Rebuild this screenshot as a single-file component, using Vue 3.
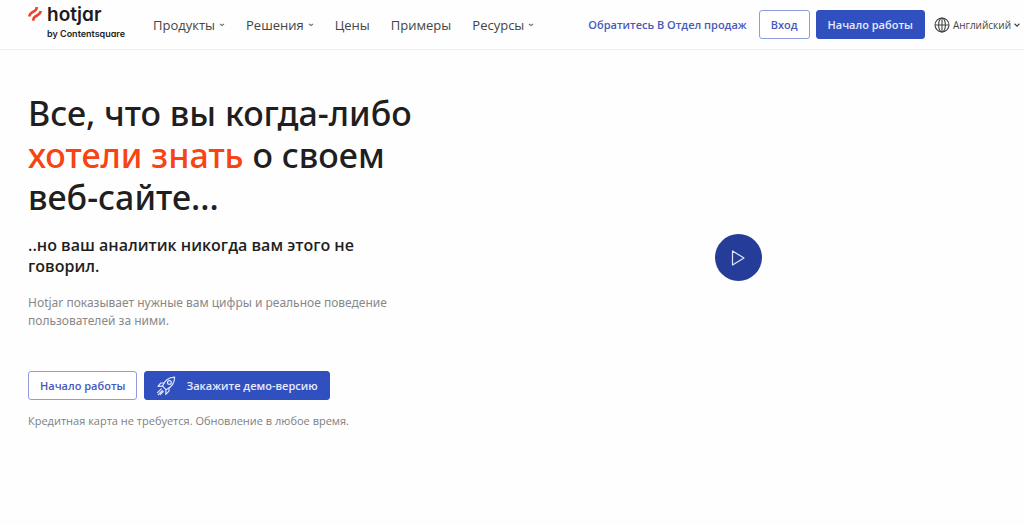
<script setup>
const menu = [
  { label: 'Продукты', more: true },
  { label: 'Решения', more: true },
  { label: 'Цены', more: false },
  { label: 'Примеры', more: false },
  { label: 'Ресурсы', more: true },
]
</script>

<template>
  <div class="page">
    <header class="bar">
      <a class="logo" href="#" aria-label="hotjar by Contentsquare">
        <svg class="mark" viewBox="0 0 14 16" aria-hidden="true">
          <g fill="none" stroke="#e8452c" stroke-width="2.6">
            <path d="M8.600 1v1.200c0 3.600-7.200 3.200-7.200 8.200" />
            <path d="M12.600 5c0 5-7.200 4.400-7.200 8.400v1.400" />
          </g>
        </svg>
        <span class="words">
          <span class="name">hotjar</span>
          <span class="by">by Contentsquare</span>
        </span>
      </a>
      <nav class="menu">
        <a v-for="item in menu" :key="item.label" href="#">
          {{ item.label }}
          <svg v-if="item.more" class="caret" viewBox="0 0 6 4" aria-hidden="true">
            <path d="M1 1l2 1.500L5 1" fill="none" stroke="#777" stroke-width="1.200" />
          </svg>
        </a>
      </nav>
      <div class="actions">
        <a class="sales" href="#">Обратитесь В Отдел продаж</a>
        <button class="btn outline login" type="button">Вход</button>
        <button class="btn solid start" type="button">Начало работы</button>
        <button class="lang" type="button">
          <svg class="globe" viewBox="0 0 16 16" aria-hidden="true">
            <g fill="none" stroke="#444" stroke-width="1.100">
              <circle cx="8" cy="8" r="7" />
              <ellipse cx="8" cy="8" rx="3.400" ry="7" />
              <path d="M1 8h14M8 1v14" />
            </g>
          </svg>
          <span>Английский</span>
          <svg class="chev" viewBox="0 0 6 4" aria-hidden="true">
            <path d="M.6.8L3 3.100 5.400.8" fill="none" stroke="#444" stroke-width="1.200" />
          </svg>
        </button>
      </div>
    </header>

    <main class="hero">
      <section class="copy">
        <h1>Все, что вы когда-либо <em>хотели знать</em> о своем веб-сайте...</h1>
        <h2>..но ваш аналитик никогда вам этого не говорил.</h2>
        <p class="lead">Hotjar показывает нужные вам цифры и реальное поведение пользователей за ними.</p>
        <div class="cta">
          <button class="btn outline" type="button">Начало работы</button>
          <button class="btn solid demo" type="button">
            <svg class="rocket" viewBox="0 0 20 20" aria-hidden="true">
              <g fill="none" stroke="#dfe6ff" stroke-width="1.200" stroke-linejoin="round" stroke-linecap="round">
                <path d="M6.500 10.200C8.500 5 12.500 1.300 18.600 1.200c.1 6-3.400 10.200-8.700 12.500z" />
                <circle cx="13.400" cy="6.500" r="1.900" />
                <path d="M8.300 7H4.800L2 10.300l4.500-.1M13 11.800v3.400L9.800 18.400l.1-4.700M5.300 12.900L1.500 16.600M6.300 14.600l-4 4M7.200 15.500l-3 3.100" />
              </g>
            </svg>
            <span>Закажите демо-версию</span>
          </button>
        </div>
        <p class="note">Кредитная карта не требуется. Обновление в любое время.</p>
      </section>
      <section class="media">
        <button class="play" type="button" aria-label="Воспроизвести видео">
          <svg viewBox="0 0 14 16" aria-hidden="true">
            <path d="M1.500 1v14L13 8z" fill="none" stroke="#dfe5ff" stroke-width="1.200" stroke-linejoin="round" />
          </svg>
        </button>
      </section>
    </main>
  </div>
</template>

<style>
body {
  margin: 0;
  background: #fefefe;
}
</style>

<style scoped>
.page {
  font-family: "Open Sans", "Noto Sans", sans-serif;
  color: #1f1f21;
}
.page * {
  box-sizing: border-box;
}
a {
  color: inherit;
  text-decoration: none;
}
button {
  font: inherit;
  cursor: pointer;
}
.bar {
  display: flex;
  align-items: center;
  height: 50px;
  padding: 0 4px 0 28px;
  border-bottom: 1px solid #efefef;
}
.logo {
  display: flex;
  align-items: flex-start;
  gap: 5px;
  width: 125px;
  padding-bottom: 3px;
  color: #1c1c1e;
  font-family: Inter, sans-serif;
  font-feature-settings: "cv11";
}
.mark {
  width: 14px;
  height: 16px;
}
.words {
  display: flex;
  flex-direction: column;
}
.name {
  font-size: 19px;
  line-height: 18px;
  font-weight: 600;
}
.by {
  margin-top: 4px;
  font-size: 9px;
  line-height: 12px;
  font-weight: 600;
  white-space: nowrap;
}
.menu {
  display: flex;
  gap: 21px;
  font-size: 13px;
  color: #444;
  white-space: nowrap;
}
.menu a {
  display: flex;
  align-items: center;
  gap: 4px;
}
.caret {
  width: 6px;
  height: 4px;
}
.actions {
  display: flex;
  align-items: center;
  margin-left: auto;
  white-space: nowrap;
}
.sales {
  margin-right: 12px;
  font-size: 11px;
  font-weight: 600;
  color: #4659ba;
}
.btn {
  display: flex;
  align-items: center;
  justify-content: center;
  height: 29px;
  padding: 0 11px;
  border: 1px solid #3150bf;
  border-radius: 3px;
  font-size: 11px;
  font-weight: 600;
  white-space: nowrap;
}
.outline {
  background: #fff;
  border-color: #8f9ddb;
  color: #4659ba;
}
.solid {
  background: #3150bf;
  color: #e6ebff;
}
.login {
  margin-right: 6px;
}
.start {
  margin-right: 9px;
}
.lang {
  display: flex;
  align-items: center;
  gap: 3px;
  padding: 0;
  border: 0;
  background: none;
  font-size: 10px;
  color: #444;
}
.globe {
  width: 16px;
  height: 16px;
}
.chev {
  width: 6px;
  height: 4px;
}
.hero {
  display: grid;
  grid-template-columns: 400px 1fr;
  gap: 24px;
  padding: 42px 0 0 28px;
}
h1 {
  margin: 0;
  font-family: "Noto Sans", "Open Sans", sans-serif;
  font-size: 34px;
  line-height: 42px;
  font-weight: 500;
}
em {
  font-style: normal;
  color: #f84312;
}
h2 {
  margin: 17px 0 0;
  font-size: 16px;
  line-height: 21px;
  font-weight: 600;
}
.lead {
  margin: 17px 0 0;
  font-family: "Noto Sans", "Open Sans", sans-serif;
  font-size: 12px;
  line-height: 18px;
  color: #888;
}
.cta {
  display: flex;
  gap: 7px;
  margin-top: 41px;
}
.cta .btn {
  height: 29px;
}
.demo {
  gap: 10px;
}
.rocket {
  width: 20px;
  height: 20px;
}
.note {
  margin: 13px 0 0;
  font-size: 11px;
  line-height: 16px;
  color: #808080;
}
.media {
  display: flex;
  align-items: center;
  justify-content: center;
  padding-bottom: 6px;
}
.play {
  display: flex;
  align-items: center;
  justify-content: center;
  width: 47px;
  height: 47px;
  padding: 0;
  border: 0;
  border-radius: 50%;
  background: #263c99;
}
.play svg {
  width: 14px;
  height: 16px;
}
</style>
